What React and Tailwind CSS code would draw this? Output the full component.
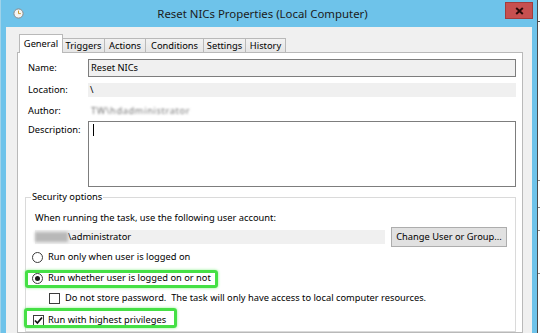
import React from "react";

function Tab({ label, selected, w }) {
  if (selected) {
    return (
      <div
        className={`relative z-10 -mb-px h-[19px] ${w} border border-b-0 border-[#b9b9b9] bg-white flex items-center justify-center`}
      >
        <span className="-mt-[1px]">{label}</span>
      </div>
    );
  }
  return (
    <div
      className={`h-[14px] ${w} border-t border-r border-[#b9b9b9] bg-gradient-to-b from-[#f2f2f2] to-[#e5e5e5] flex items-center justify-center`}
    >
      <span>{label}</span>
    </div>
  );
}

function Radio({ checked }) {
  return (
    <div className="w-[11px] h-[11px] rounded-full border border-[#3c3c3c] bg-white flex items-center justify-center shrink-0">
      {checked && <div className="w-[5px] h-[5px] rounded-full bg-[#1a1a1a]" />}
    </div>
  );
}

function Check({ checked }) {
  return (
    <div className="w-[11px] h-[11px] border border-[#3c3c3c] bg-white flex items-center justify-center shrink-0">
      {checked && (
        <svg width="9" height="9" viewBox="0 0 9 9">
          <path d="M1 4.5 L3.4 7 L8 1.5" fill="none" stroke="#111" strokeWidth="1.8" />
        </svg>
      )}
    </div>
  );
}

export default function App() {
  return (
    <div className="w-[540px] h-[333px] overflow-hidden flex bg-white text-[9.3px] leading-[16px] text-black font-['Noto_Sans',sans-serif]">
      {/* Window */}
      <div className="w-[537px] h-full flex flex-col bg-[#6ec3ea] border-l border-[#9fd3ea]">
        {/* Title bar */}
        <div className="h-[27px] flex items-center shrink-0">
          <div className="ml-[12px] w-[11px] h-[11px]">
            <svg width="11" height="11" viewBox="0 0 11 11">
              <circle cx="5.5" cy="5.5" r="4.6" fill="#f4f4f4" stroke="#8a8a8a" strokeWidth="1" />
              <path d="M5.5 2.6 V5.6 H7.8" fill="none" stroke="#c99a2e" strokeWidth="1" />
            </svg>
          </div>
          <div className="flex-1 text-center text-[11.4px] leading-[20px] text-[#1b1b1b] pr-[4px]">
            Reset NICs Properties (Local Computer)
          </div>
          <div className="mr-[4px] -mt-[6px] w-[28px] h-[17px] bg-[#c75050] border border-[#a33c3c] flex items-center justify-center">
            <svg width="9" height="8" viewBox="0 0 9 8">
              <path d="M1.2 1 L7.8 7 M7.8 1 L1.2 7" stroke="#2a0a0a" strokeWidth="2" />
            </svg>
          </div>
        </div>

        {/* Body */}
        <div className="flex-1 ml-[5px] mr-[5px] bg-[#f0f0f0] pt-[7px] pl-[11px] pr-[9px] flex flex-col">
          {/* Tabs */}
          <div className="h-[18px] pl-[2px] flex items-end shrink-0">
            <Tab label="General" selected w="w-[44px]" />
            <Tab label="Triggers" w="w-[42px]" />
            <Tab label="Actions" w="w-[41px]" />
            <Tab label="Conditions" w="w-[58px]" />
            <Tab label="Settings" w="w-[42px]" />
            <Tab label="History" w="w-[40px]" />
          </div>

          {/* Panel */}
          <div className="flex-1 bg-white border border-[#b9b9b9] pt-[6px] pl-[10px] pr-[6px] flex flex-col">
            {/* Name */}
            <div className="flex items-center h-[18px]">
              <div className="w-[60px]">Name:</div>
              <div className="flex-1 h-[18px] border border-[#7d7d7d] bg-[#f0f0f0] pl-[2px] flex items-center">
                Reset NICs
              </div>
            </div>
            {/* Location */}
            <div className="flex items-center h-[14px] mt-[6px]">
              <div className="w-[60px]">Location:</div>
              <div className="flex-1 h-[14px] bg-[#f0f0f0] pl-[2px] flex items-center">\</div>
            </div>
            {/* Author */}
            <div className="flex items-center h-[16px] mt-[6px]">
              <div className="w-[60px]">Author:</div>
              <div className="pl-[3px] text-[#777] blur-[1.2px] tracking-[0.6px]">TW\hdadministrator</div>
            </div>
            {/* Description */}
            <div className="flex mt-[2px]">
              <div className="w-[60px] pt-[1px]">Description:</div>
              <div className="flex-1 h-[66px] border border-[#7d7d7d] bg-white">
                <div className="ml-[4px] mt-[2px] w-px h-[12px] bg-black" />
              </div>
            </div>

            {/* Security options */}
            <fieldset className="mt-[2px] -ml-[3px] border border-[#dadada] pl-[9px] pr-[8px] flex-1">
              <legend className="-ml-[4px] px-[1px] leading-[16px]">Security options</legend>
              <div className="mt-[5px] h-[16px] flex items-center">
                When running the task, use the following user account:
              </div>
              <div className="mt-[1px] h-[20px] flex items-center">
                <div className="w-[350px] h-[14px] bg-[#f0f0f0] flex items-center">
                  <span className="w-[33px] h-[10px] bg-[#b8b8b8] blur-[1.5px]" />
                  <span>\administrator</span>
                </div>
                <div className="ml-[6px] w-[116px] h-[20px] bg-[#e1e1e1] border border-[#adadad] flex items-center justify-center">
                  Change User or Group...
                </div>
              </div>
              <div className="h-[20px] flex items-center -ml-[3px]">
                <Radio />
                <span className="ml-[5px]">Run only when user is logged on</span>
              </div>
              <div className="relative mt-[1px] h-[20px] flex items-center -ml-[3px]">
                <Radio checked />
                <span className="ml-[5px]">Run whether user is logged on or not</span>
                <div className="absolute left-[-7px] top-[2px] w-[193px] h-[18px] border-[3px] border-[#45e045] rounded-[3px] shadow-[0_0_3px_#8ef08e]" />
              </div>
              <div className="h-[20px] flex items-center ml-[14px]">
                <Check />
                <span className="ml-[5px]">
                  Do not store password.&nbsp; The task will only have access to local computer resources.
                </span>
              </div>
              <div className="relative mt-[2px] h-[20px] flex items-center -ml-[2px]">
                <Check checked />
                <span className="ml-[4px]">Run with highest privileges</span>
                <div className="absolute left-[-9px] top-[-2px] w-[153px] h-[20px] border-[3px] border-[#45e045] rounded-[3px] shadow-[0_0_3px_#8ef08e]" />
              </div>
            </fieldset>
          </div>
        </div>
      </div>

      {/* Background app strip at right */}
      <div className="flex-1 border-l border-[#4a4a4a] bg-white flex flex-col">
        <div className="mt-[21px] h-px bg-[#555]" />
        <div className="mt-[158px] h-px bg-[#888]" />
        <div className="mt-[26px] h-px bg-[#888]" />
        <div className="mt-[22px] h-px bg-[#888]" />
        <div className="mt-[42px] h-px bg-[#888]" />
      </div>
    </div>
  );
}
